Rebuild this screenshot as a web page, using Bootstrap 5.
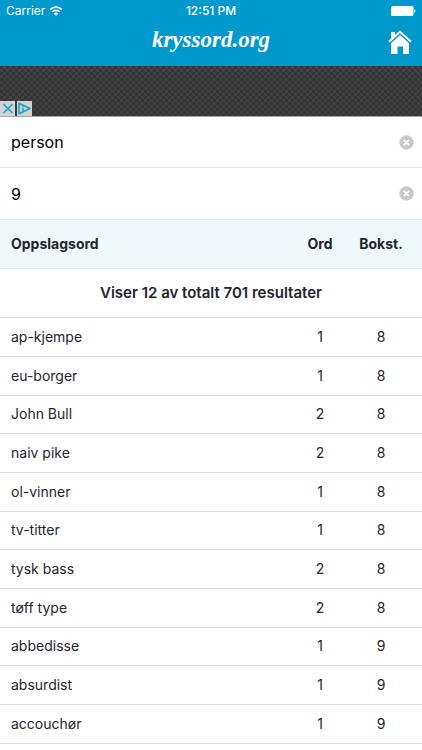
<!DOCTYPE html>
<html lang="no">
<head>
<meta charset="utf-8">
<meta name="viewport" content="width=device-width, initial-scale=1">
<title>kryssord.org</title>
<link href="https://cdn.jsdelivr.net/npm/bootstrap@5.3.0/dist/css/bootstrap.min.css" rel="stylesheet">
<style>
  body { font-family: Inter, "Liberation Sans", sans-serif; font-size: 14px; line-height: 20px; color: #24242f; background: #fff; overflow-x: hidden; }
  .topbar { background: #0099cd; color: #fff; }
  .statusbar { height: 22px; font-size: 12px; line-height: 22px; padding: 0 6px; }
  .statusbar .side { flex: 1 1 0; }
  .clock { font-weight: 500; }
  .brandbar { height: 44px; padding: 0 10px; }
  .brandbar .side { flex: 1 1 0; }
  .logo { font-family: "Liberation Serif", serif; font-style: italic; font-weight: 700; font-size: 23px; line-height: 36px; }
  .ad { height: 51px; gap: 2px; background-color: #343434; border-bottom: 1px solid #a5a5a5;
    background-image: repeating-conic-gradient(#424242 0 25%, transparent 0 50%);
    background-size: 6px 6px; }
  .ad button { width: 15px; height: 15px; background: #d3d3d3; }
  .field { height: 52px; border-bottom: 1px solid #dfe8ec; padding: 0 8px 0 11px; }
  .field:first-child { height: 51px; }
  .field input { font-size: 16px; line-height: 24px; color: #000; outline: 0; min-width: 0; }
  .results { table-layout: fixed; }
  .results th, .results td { padding: 0 0 0 11px; vertical-align: middle; border-bottom: 1px solid #dedfe1; }
  .results .num { text-align: center; padding: 0; }
  .results thead th { height: 49px; }
  .results .heads th { height: 48px; background: #eff9fc; border-color: #dce8ec; }
  .results .summary { text-align: center; padding: 0; font-size: 15px; font-weight: 600; }
  .results tbody td { height: 39px; }
  .results tbody tr:nth-child(3n) td { height: 38px; }
  .col-ord { width: 62px; }
  .col-len { width: 60px; }
  .col-end { width: 11px; }
  svg { display: block; }
</style>
</head>
<body>
<header class="topbar">
  <div class="statusbar d-flex align-items-center">
    <div class="side d-flex align-items-center gap-1">
      <span>Carrier</span>
      <svg width="14" height="10" viewBox="0 0 14 10" fill="none" stroke="#fff" stroke-width="1.6" aria-hidden="true"><path d="M1 3.6a8.5 8.5 0 0 1 12 0M3.2 5.9a5.4 5.4 0 0 1 7.6 0"/><path d="M7 9.8 4.8 7.6a3.1 3.1 0 0 1 4.4 0z" fill="#fff" stroke="none"/></svg>
    </div>
    <span class="clock">12:51 PM</span>
    <div class="side d-flex justify-content-end">
      <svg width="25" height="10" viewBox="0 0 25 10" fill="#fff" aria-hidden="true"><rect width="22.5" height="10" rx="1.5"/><path d="M23.3 3.2c1.6.6 1.6 3 0 3.6z"/></svg>
    </div>
  </div>
  <div class="brandbar d-flex">
    <div class="side"></div>
    <a href="#" class="logo text-white text-decoration-none">kryssord.org</a>
    <nav class="side d-flex justify-content-end pt-2">
      <a href="#" aria-label="Hjem"><svg width="24" height="24" viewBox="0 0 24 24" fill="#fff"><path d="M3 2h4v4.200L3 9.700z"/><path d="M12 4.500 21 12.500V24h-6v-7.500H9.500V24H3V12.500z"/><path d="M1 13 12 3.200l11 9.800" fill="none" stroke="#0099cd" stroke-width="3"/><path d="M1 11.800 12 1.800l11 10" fill="none" stroke="#fff" stroke-width="2"/></svg></a>
    </nav>
  </div>
</header>
<aside class="ad d-flex align-items-end" aria-label="Annonse">
  <button type="button" class="border-0 p-0" aria-label="Lukk annonse"><svg width="15" height="15" viewBox="0 0 15 15" fill="none" stroke="#18a5c4" stroke-width="1.6"><path d="m3.500 3 9 9m0-9-9 9"/></svg></button>
  <button type="button" class="border-0 p-0" aria-label="Om annonsen"><svg width="15" height="15" viewBox="0 0 15 15" fill="none" stroke="#18a5c4" stroke-width="1.600" stroke-linejoin="round"><path d="M2 2.200v10.600l11-5.300z"/><path d="M6 6.800V10M6 4.800V6"/></svg></button>
</aside>
<main>
  <form>
    <div class="field d-flex align-items-center">
      <input type="text" class="border-0 p-0 flex-grow-1 bg-transparent" aria-label="Oppslagsord" value="person">
      <button type="button" class="border-0 bg-transparent p-0" aria-label="Tøm oppslagsord"><svg width="15" height="15" viewBox="0 0 15 15"><circle cx="7.500" cy="7.500" r="7.200" fill="#c8c8c8"/><path d="m4.800 4.800 5.400 5.400m0-5.400-5.400 5.400" stroke="#fff" stroke-width="1.700"/></svg></button>
    </div>
    <div class="field d-flex align-items-center">
      <input type="text" class="border-0 p-0 flex-grow-1 bg-transparent" aria-label="Antall bokstaver" value="9">
      <button type="button" class="border-0 bg-transparent p-0" aria-label="Tøm antall bokstaver"><svg width="15" height="15" viewBox="0 0 15 15"><circle cx="7.500" cy="7.500" r="7.200" fill="#c8c8c8"/><path d="m4.800 4.800 5.400 5.400m0-5.400-5.400 5.400" stroke="#fff" stroke-width="1.700"/></svg></button>
    </div>
  </form>
  <table class="results w-100">
    <colgroup><col><col class="col-ord"><col class="col-len"><col class="col-end"></colgroup>
    <thead>
      <tr class="heads"><th scope="col">Oppslagsord</th><th scope="col" class="num">Ord</th><th scope="col" class="num">Bokst.</th><th class="num"></th></tr>
      <tr><th colspan="4" class="summary">Viser 12 av totalt 701 resultater</th></tr>
    </thead>
    <tbody>
      <tr><td>ap-kjempe</td><td class="num">1</td><td class="num">8</td><td class="num"></td></tr>
      <tr><td>eu-borger</td><td class="num">1</td><td class="num">8</td><td class="num"></td></tr>
      <tr><td>John Bull</td><td class="num">2</td><td class="num">8</td><td class="num"></td></tr>
      <tr><td>naiv pike</td><td class="num">2</td><td class="num">8</td><td class="num"></td></tr>
      <tr><td>ol-vinner</td><td class="num">1</td><td class="num">8</td><td class="num"></td></tr>
      <tr><td>tv-titter</td><td class="num">1</td><td class="num">8</td><td class="num"></td></tr>
      <tr><td>tysk bass</td><td class="num">2</td><td class="num">8</td><td class="num"></td></tr>
      <tr><td>tøff type</td><td class="num">2</td><td class="num">8</td><td class="num"></td></tr>
      <tr><td>abbedisse</td><td class="num">1</td><td class="num">9</td><td class="num"></td></tr>
      <tr><td>absurdist</td><td class="num">1</td><td class="num">9</td><td class="num"></td></tr>
      <tr><td>accouchør</td><td class="num">1</td><td class="num">9</td><td class="num"></td></tr>
    </tbody>
  </table>
</main>
<script src="https://cdn.jsdelivr.net/npm/bootstrap@5.3.0/dist/js/bootstrap.bundle.min.js"></script>
</body>
</html>
